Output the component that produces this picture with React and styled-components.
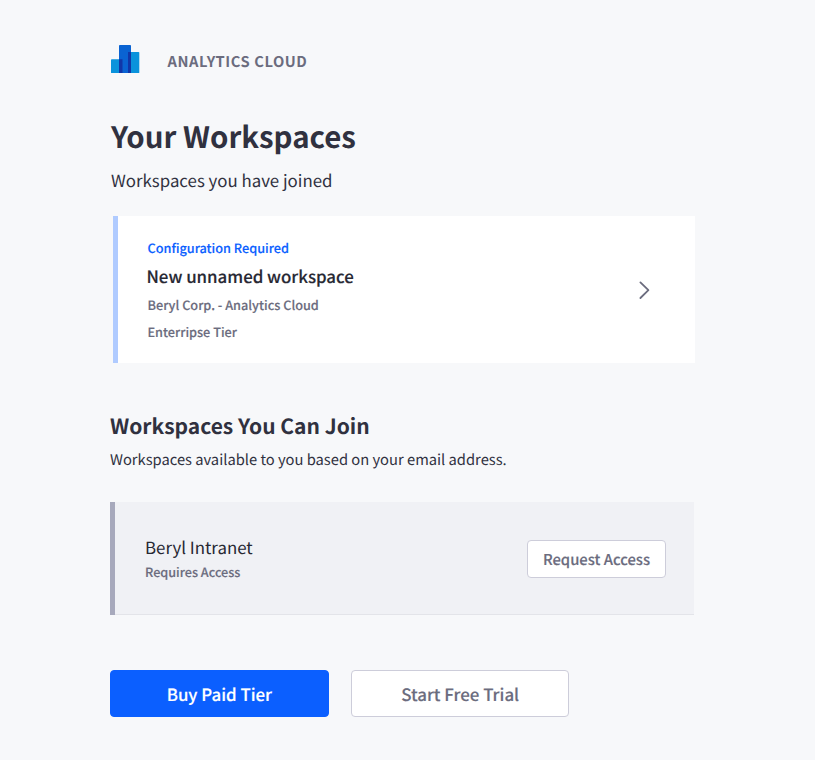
import React from "react";
import styled, { createGlobalStyle } from "styled-components";

const Global = createGlobalStyle`
  * { box-sizing: border-box; }
  body { margin: 0; background: #f7f8fa; text-rendering: geometricPrecision; }
`;

const Page = styled.main`
  width: 815px;
  height: 760px;
  padding: 43px 120px 0 110px;
  background: #f7f8fa;
  font-family: "Noto Sans CJK SC", sans-serif;
`;

const Text = styled.div`
  margin: ${(p) => p.$m || "0"};
  font-size: ${(p) => p.$size}px;
  line-height: ${(p) => p.$lh}px;
  font-weight: ${(p) => p.$weight || 400};
  color: ${(p) => p.$color || "#30313f"};
  letter-spacing: ${(p) => p.$ls || 0}px;
  white-space: nowrap;
`;

const Caption = styled(Text)`
  font-weight: 500;
  -webkit-text-stroke: 0.15px currentColor;
`;

const Brand = styled.header`
  display: flex;
  align-items: center;
  gap: 27.5px;
  height: 36px;
`;

const Logo = styled.svg`
  display: block;
  margin-bottom: 6px;
`;

const JoinedCard = styled.section`
  display: flex;
  justify-content: space-between;
  align-items: center;
  width: 582px;
  height: 147px;
  margin: 23px 0 0 3px;
  padding: 0 40px 0 29.5px;
  background: #fff;
  border-left: 5px solid #b0cbff;
`;

const Details = styled.div`
  align-self: flex-start;
  padding-top: ${(p) => p.$top}px;
`;

const JoinCard = styled(JoinedCard)`
  width: 584px;
  height: 113px;
  margin: 31px 0 0;
  padding: 1px 28px 0 30px;
  background: #f0f1f5;
  border-left-color: #a7a9bc;
  box-shadow: inset 0 -1px 0 #e3e4e9;
`;

const Button = styled.button`
  width: ${(p) => p.$w}px;
  height: ${(p) => p.$h}px;
  padding: 0;
  border: 1px solid ${(p) => (p.$primary ? "#0b5fff" : "#cdcdda")};
  border-radius: 4px;
  background: ${(p) => (p.$primary ? "#0b5fff" : "#fff")};
  color: ${(p) => (p.$primary ? "#fff" : "#6b6c7e")};
  font: 500 ${(p) => p.$size}px "Noto Sans CJK SC", sans-serif;
  text-rendering: geometricPrecision;
  -webkit-text-stroke: 0.15px currentColor;
`;

const Actions = styled.div`
  display: flex;
  gap: 22.3px;
  margin-top: 55px;
`;

export default function App() {
  return (
    <Page>
      <Global />
      <Brand>
        <Logo width="30" height="30" viewBox="0 0 30 30">
          <rect x="1" y="16.2" width="11.5" height="14" rx="0.8" fill="#0a93dc" />
          <rect x="18" y="9" width="11.3" height="21.2" rx="0.8" fill="#0a93dc" />
          <rect x="9" y="2" width="12" height="28.2" rx="0.8" fill="#0a63d2" />
          <path d="M9 16.2h3.5V30.2H9zM18 9h3v21.2h-3z" fill="#1136a8" />
        </Logo>
        <Text $size={14.7} $lh={20} $m="2px 0 0" $weight={700} $color="#6b6c7e" $ls={0.58}>ANALYTICS CLOUD</Text>
      </Brand>
      <Text as="h1" $size={29.45} $lh={44} $weight={700} $m="35px 0 0 1px">Your Workspaces</Text>
      <Text $size={16.85} $lh={26} $m="9px 0 0 1px">Workspaces you have joined</Text>
      <JoinedCard>
        <Details $top={21.5}>
          <Caption $size={12.7} $lh={20} $color="#0b5fff">Configuration Required</Caption>
          <Caption $size={16.85} $lh={26} $m="5.5px 0 0 -1px" $color="#272833">New unnamed workspace</Caption>
          <Caption $size={12.7} $lh={20} $m="6px 0 0" $color="#6b6c7e">Beryl Corp. - Analytics Cloud</Caption>
          <Caption $size={12.7} $lh={20} $m="7px 0 0" $color="#6b6c7e">Enterripse Tier</Caption>
        </Details>
        <svg width="20" height="20" viewBox="0 0 20 20" fill="none" stroke="#6b6c7e" strokeWidth="1.8" strokeLinecap="round" strokeLinejoin="round">
          <path d="M5.4 2.4L13.4 10.2L5.4 18" />
        </svg>
      </JoinedCard>
      <Text as="h2" $size={21} $lh={30} $weight={700} $m="47.5px 0 0">Workspaces You Can Join</Text>
      <Text $size={14.73} $lh={22} $m="8.5px 0 0">Workspaces available to you based on your email address.</Text>
      <JoinCard>
        <Details $top={31}>
          <Text $size={16.85} $lh={26} $color="#272833">Beryl Intranet</Text>
          <Caption $size={12.65} $lh={20} $m="2px 0 0" $color="#6b6c7e">Requires Access</Caption>
        </Details>
        <Button $w={139} $h={38} $size={14.8}>Request Access</Button>
      </JoinCard>
      <Actions>
        <Button $primary $w={218.7} $h={47} $size={16.85}>Buy Paid Tier</Button>
        <Button $w={218.3} $h={47} $size={16.9}>Start Free Trial</Button>
      </Actions>
    </Page>
  );
}
